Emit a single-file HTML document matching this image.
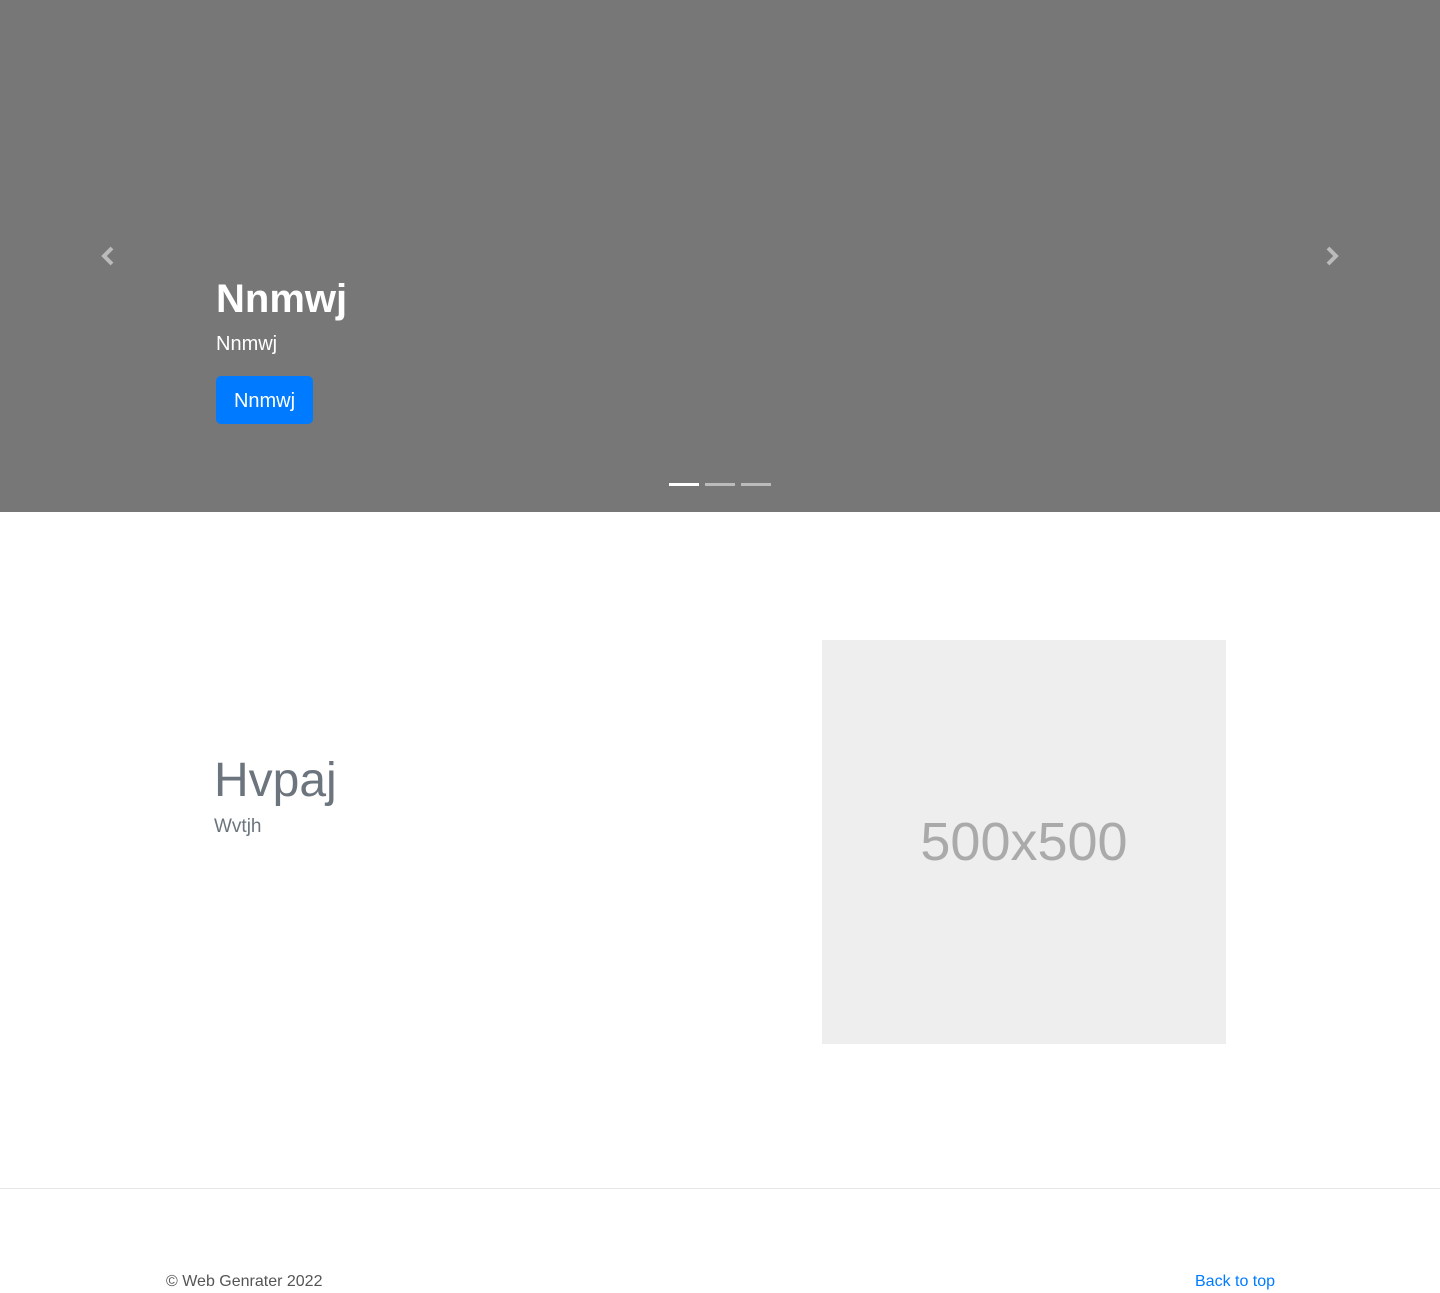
<!DOCTYPE html>
<html><head><style>
body{margin:0;font-family:"Liberation Sans",sans-serif;background:#fff;width:1440px;height:1293px;position:relative;overflow:hidden}
.hero{position:absolute;left:0;top:0;width:1440px;height:512px;background:#777}
.abs{position:absolute;white-space:nowrap}
</style></head><body>
<div class="hero">
<svg class="abs" style="left:100px;top:246px" width="16" height="20" viewBox="0 0 16 20"><path d="M12 2 L4 10 L12 18" stroke="#bbb" stroke-width="4" fill="none"/></svg>
<svg class="abs" style="left:1324px;top:246px" width="16" height="20" viewBox="0 0 16 20"><path d="M4 2 L12 10 L4 18" stroke="#bbb" stroke-width="4" fill="none"/></svg>
<div class="abs" style="left:216px;top:277px;font-size:40px;font-weight:bold;color:#fff">Nnmwj</div>
<div class="abs" style="left:216px;top:333px;font-size:20px;color:#fff">Nnmwj</div>
<div class="abs" style="left:216px;top:376px;width:97px;height:48px;background:#007bff;border-radius:5px;color:#fff;font-size:20px;line-height:50px;text-align:center">Nnmwj</div>
<div class="abs" style="left:669px;top:483px;width:30px;height:3px;background:#fff"></div>
<div class="abs" style="left:705px;top:483px;width:30px;height:3px;background:#bbb"></div>
<div class="abs" style="left:741px;top:483px;width:30px;height:3px;background:#bbb"></div>
</div>
<div class="abs" style="left:214px;top:753px;font-size:48px;color:#6c757d">Hvpaj</div>
<div class="abs" style="left:214px;top:816px;font-size:19px;color:#6c757d;font-weight:300">Wvtjh</div>
<div class="abs" style="left:822px;top:640px;width:404px;height:404px;background:#eee;color:#aaa;font-size:54px;line-height:404px;text-align:center">500x500</div>
<div class="abs" style="left:0;top:1188px;width:1440px;height:1px;background:#e5e5e5"></div>
<div class="abs" style="left:166px;top:1273px;font-size:16px;color:#555">© Web Genrater 2022</div>
<div class="abs" style="left:1195px;top:1273px;font-size:16px;color:#007bff">Back to top</div>
</body></html>
